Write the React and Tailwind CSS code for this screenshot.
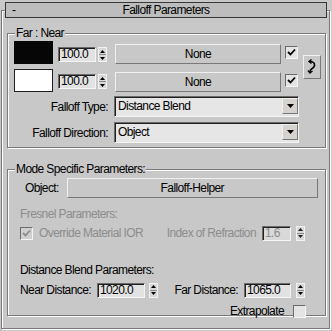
const etched = "border border-[#7a7a7a] shadow-[inset_1px_1px_0_#fff,1px_1px_0_#fff]";
const raised = "border border-t-[#f0f0f0] border-l-[#f0f0f0] border-b-[#787878] border-r-[#787878]";
const sunken = "border border-t-[#6b6b6b] border-l-[#6b6b6b] border-b-[#f4f4f4] border-r-[#f4f4f4] shadow-[inset_1px_1px_0_#202020]";

function Arrows({ disabled }) {
  const fill = disabled ? "#202020" : "#000";
  return (
    <div className="w-[9px] h-[15px] flex flex-col bg-[#d8d8d8] border border-[#f2f2f2]">
      <div className="flex-1 flex items-center justify-center border-b border-[#8a8a8a]">
        <svg width="5" height="3" viewBox="0 0 5 3"><path d="M2.5 0 L5 3 L0 3 Z" fill={fill} /></svg>
      </div>
      <div className="flex-1 flex items-center justify-center">
        <svg width="5" height="3" viewBox="0 0 5 3"><path d="M0 0 L5 0 L2.5 3 Z" fill={fill} /></svg>
      </div>
    </div>
  );
}

function Spinner({ w, value, disabled, gap }) {
  return (
    <div className="flex items-center">
      <div
        className={`${w} h-[15px] ${sunken} ${disabled ? "bg-[#d9d9d9] text-[#8c8c8c]" : "bg-[#e2e2e2]"} pl-[2px] leading-[13px]`}
      >
        {value}
      </div>
      <div className={gap}>
        <Arrows disabled={disabled} />
      </div>
    </div>
  );
}

function Check({ checked, disabled }) {
  return (
    <div
      className={`w-[13px] h-[13px] border border-t-[#6b6b6b] border-l-[#6b6b6b] border-b-[#f4f4f4] border-r-[#f4f4f4] ${disabled ? "bg-[#cfcfcf]" : "bg-[#e4e4e4]"} flex items-center justify-center`}
    >
      {checked && (
        <svg width="9" height="9" viewBox="0 0 9 9">
          <path d="M1 4 L3.5 6.5 L8 1.5" stroke={disabled ? "#8c8c8c" : "#000"} strokeWidth="1.8" fill="none" />
        </svg>
      )}
    </div>
  );
}

function Dropdown({ value }) {
  return (
    <div className={`w-[185px] h-[21px] ${sunken} bg-[#e6e6e6] flex items-start justify-between`}>
      <span className="pl-[3px] leading-[18px]">{value}</span>
      <div className={`mt-[1px] w-[16px] h-[16px] ${raised} bg-[#d6d3ce] flex items-center justify-center`}>
        <svg width="7" height="4" viewBox="0 0 7 4"><path d="M0 0 L7 0 L3.5 4 Z" fill="#000" /></svg>
      </div>
    </div>
  );
}

export default function App() {
  return (
    <div className="w-[332px] h-[331px] bg-[#c8c8c8] overflow-hidden pt-[10px] pl-[1px] text-black text-[12px] tracking-[-0.6px] font-['Liberation_Sans',Arial,sans-serif]">
      <div className={`w-[329px] h-[319px] ${etched}`}>
        {/* Rollout title */}
        <div className="-mt-[9px] ml-[3px] w-[322px] h-[16px] border border-[#383838] bg-[#bdbdbd] grid grid-cols-[1fr_auto_1fr] items-center leading-[14px]">
          <span className="pl-[6px]">-</span>
          <span>Falloff Parameters</span>
          <span />
        </div>

        {/* Far : Near */}
        <div className={`relative mt-[15px] ml-[5px] w-[319px] h-[115px] ${etched}`}>
          <span className="absolute -top-[8px] left-[7px] bg-[#c8c8c8] px-[1px] leading-[14px]">Far : Near</span>
          <div className="pt-[7px] pl-[6px] flex items-center">
            <div className="flex flex-col gap-[5px]">
              <div className="flex items-center h-[23px]">
                <div className="w-[39px] h-[23px] bg-[#060606]" />
                <div className="ml-[5px] mt-[4px]">
                  <Spinner w="w-[38px]" value="100.0" gap="ml-[2px]" />
                </div>
                <div className={`ml-[8px] mt-[3px] w-[166px] h-[20px] ${raised} bg-[#c8c8c8] flex items-center justify-center`}>None</div>
                <div className="ml-[4px]">
                  <Check checked />
                </div>
              </div>
              <div className="flex items-center h-[23px]">
                <div className="w-[39px] h-[23px] bg-white border border-[#202020]" />
                <div className="ml-[5px] mt-[2px]">
                  <Spinner w="w-[38px]" value="100.0" gap="ml-[2px]" />
                </div>
                <div className={`ml-[8px] mt-[2px] w-[166px] h-[20px] ${raised} bg-[#c8c8c8] flex items-center justify-center`}>None</div>
                <div className="ml-[4px]">
                  <Check checked />
                </div>
              </div>
            </div>
            <div className={`ml-[5px] w-[18px] h-[24px] ${raised} bg-[#c8c8c8] flex items-center justify-center`}>
              <svg width="10" height="16" viewBox="0 0 10 16">
                <path d="M2.5 2.5 Q8 2.5 7.5 6.5 Q7 9 4.5 10 Q3 11 3 13" stroke="#000" strokeWidth="1.6" fill="none" />
                <path d="M4.5 0.5 L2 2.5 L4.5 4.5" stroke="#000" strokeWidth="1.4" fill="none" />
                <path d="M1 11.5 L3 14 L5.5 12" stroke="#000" strokeWidth="1.4" fill="none" />
              </svg>
            </div>
          </div>

          <div className="mt-[4px] pl-[6px] flex items-center">
            <span className="w-[94px] text-right">Falloff Type:</span>
            <div className="ml-[6px]">
              <Dropdown value="Distance Blend" />
            </div>
          </div>
          <div className="mt-[5px] pl-[6px] flex items-center">
            <span className="w-[94px] text-right">Falloff Direction:</span>
            <div className="ml-[6px]">
              <Dropdown value="Object" />
            </div>
          </div>
        </div>

        {/* Mode Specific */}
        <div className={`relative mt-[21px] ml-[5px] w-[319px] h-[147px] ${etched}`}>
          <span className="absolute -top-[8px] left-[7px] bg-[#c8c8c8] px-[1px] leading-[14px]">Mode Specific Parameters:</span>

          <div className="pt-[8px] pl-[17px] flex items-center">
            <span>Object:</span>
            <div className={`ml-[8px] w-[251px] h-[20px] ${raised} bg-[#c8c8c8] flex items-center justify-center`}>Falloff-Helper</div>
          </div>

          <div className="pl-[12px] pr-[20px]">
            <div className="mt-[9px] leading-[14px] text-[#8c8c8c]">Fresnel Parameters:</div>
            <div className="mt-[3px] flex items-center text-[#8c8c8c]">
              <Check checked disabled />
              <span className="ml-[6px]">Override Material IOR</span>
              <span className="ml-auto">Index of Refraction</span>
              <div className="ml-[6px]">
                <Spinner w="w-[29px]" value="1.6" disabled gap="ml-[5px]" />
              </div>
            </div>

            <div className="mt-[21px] leading-[14px]">Distance Blend Parameters:</div>
            <div className="mt-[4px] flex items-center">
              <span>Near Distance:</span>
              <div className="ml-[6px]">
                <Spinner w="w-[48px]" value="1020.0" gap="ml-[4px]" />
              </div>
              <span className="ml-auto">Far Distance:</span>
              <div className="ml-[6px]">
                <Spinner w="w-[47px]" value="1065.0" gap="ml-[5px]" />
              </div>
            </div>
            <div className="mt-[3px] flex items-center justify-end -mr-[1px]">
              <span>Extrapolate</span>
              <div className="ml-[9px]">
                <Check />
              </div>
            </div>
          </div>
        </div>
      </div>
    </div>
  );
}
